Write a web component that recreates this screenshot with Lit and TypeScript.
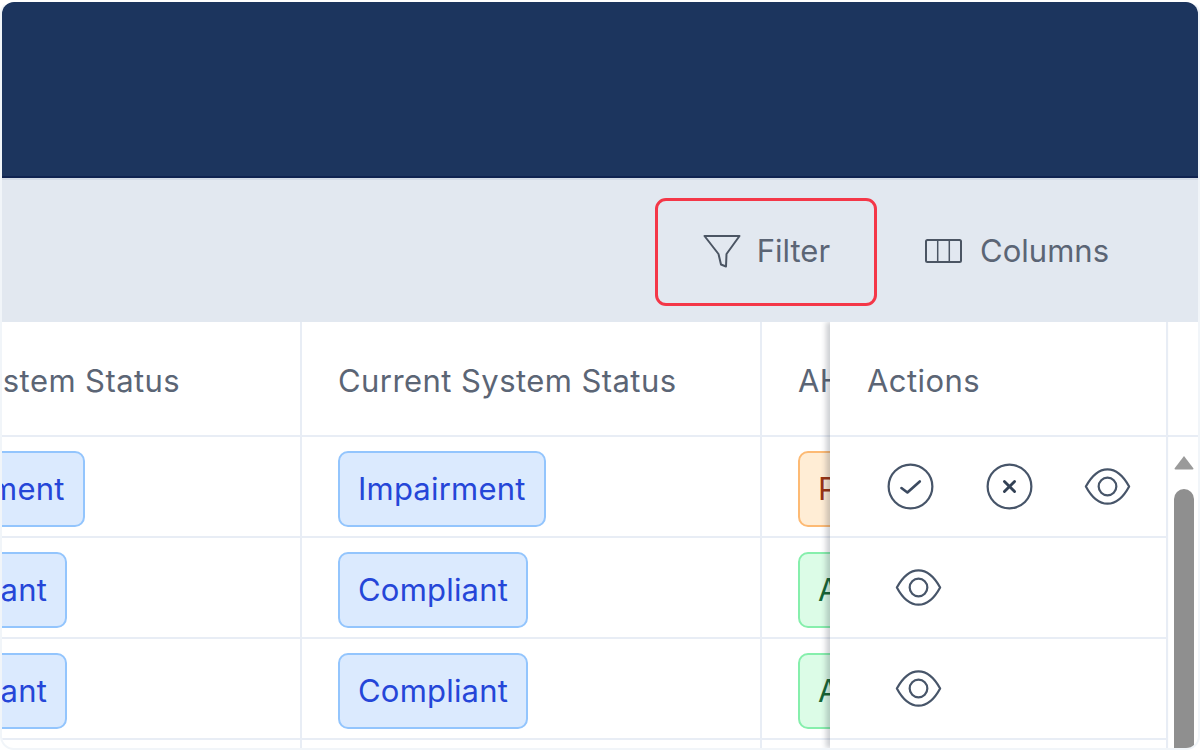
import { LitElement, html, css, svg } from "lit";
import { customElement } from "lit/decorators.js";

const checkIcon = svg`<circle cx="12" cy="12" r="9.9"/><path class="mid" d="M7.900 12.700l2.700 2 5.600-5"/>`;
const xIcon = svg`<circle cx="12" cy="12" r="9.9"/><path class="heavy" d="M9.700 9.700l4.600 4.600M14.300 9.700l-4.600 4.600"/>`;
const eyeIcon = svg`<path d="M2.200 12C4.900 7 8.200 4.200 12 4.200S19.100 7 21.800 12c-2.700 5-6 7.800-9.800 7.800S4.900 17 2.200 12Z"/><circle cx="12" cy="12" r="4"/>`;

const rows = [
  { prev: "Impairment", cur: "Impairment", ahj: "Pending", tone: "orange", actions: [checkIcon, xIcon, eyeIcon] },
  { prev: "Compliant", cur: "Compliant", ahj: "Approved", tone: "green", actions: [eyeIcon] },
  { prev: "Compliant", cur: "Compliant", ahj: "Approved", tone: "green", actions: [eyeIcon] },
  { prev: "Compliant", cur: "Compliant", ahj: "Approved", tone: "green", actions: [eyeIcon] },
];

@customElement("app-root")
export class AppRoot extends LitElement {
  static styles = css`
    :host {
      display: block;
      width: 1200px;
      height: 750px;
      background: #fff;
      font-family: Inter, "Liberation Sans", sans-serif;
      overflow: hidden;
    }
    .card {
      box-sizing: border-box;
      height: 750px;
      border: 2px solid #f1f5f9;
      border-top-color: #fff;
      border-radius: 14px;
      overflow: hidden;
      display: flex;
      flex-direction: column;
      background: #fff;
    }
    .banner {
      flex: 0 0 176px;
      box-sizing: border-box;
      background: #1c355e;
      border-bottom: 2px solid #0f2350;
    }
    .toolbar {
      flex: 0 0 144px;
      box-sizing: border-box;
      background: #e2e8f0;
      border-top: 2px solid #d3dbe6;
      display: flex;
      justify-content: flex-end;
      align-items: center;
      padding: 2px 42px 0 0;
    }
    .tool {
      box-sizing: border-box;
      height: 108px;
      display: flex;
      align-items: center;
      gap: 18px;
      padding: 0 44px 3px 45px;
      border: 3px solid transparent;
      border-radius: 11px;
      font-size: 31px;
      color: #5b6575;
    }
    .tool.active {
      border-color: #f43748;
      gap: 16px;
    }
    .tool svg {
      display: block;
      fill: none;
      stroke: #4b5563;
      stroke-width: 2;
      stroke-linejoin: round;
    }
    .table {
      flex: 1;
      min-height: 0;
      display: flex;
      overflow: hidden;
    }
    .scroll {
      flex: 0 0 828px;
      min-width: 0;
      overflow: hidden;
    }
    .grid {
      display: grid;
      grid-template-columns: 461px 460px 400px;
      margin-left: -161px;
      width: 1321px;
    }
    .cell,
    .head {
      box-sizing: border-box;
      display: flex;
      align-items: center;
      padding: 4px 0 0 36px;
      border-right: 2px solid #e8edf5;
      border-bottom: 2px solid #e8edf5;
      white-space: nowrap;
      height: 101px;
    }
    .head {
      height: 115px;
      font-size: 31px;
      letter-spacing: 0.43px;
      color: #5b6575;
      font-weight: 400;
    }
    .badge {
      box-sizing: border-box;
      height: 76px;
      display: flex;
      align-items: center;
      padding: 0 18px;
      border: 2px solid;
      border-radius: 10px;
      font-size: 31px;
      letter-spacing: 0.2px;
    }
    .blue {
      background: #dbeafe;
      border-color: #93c5fd;
      color: #2546d8;
    }
    .orange {
      background: #ffedd5;
      border-color: #fdba74;
      color: #9a3412;
    }
    .green {
      background: #dcfce7;
      border-color: #86efac;
      color: #166534;
    }
    .actions {
      flex: 0 0 338px;
      box-sizing: border-box;
      background: #fff;
      box-shadow: -4px 0 5px rgba(30, 41, 59, 0.22);
      position: relative;
    }
    .actions .head {
      padding-left: 37px;
    }
    .action-cell {
      box-sizing: border-box;
      height: 101px;
      display: flex;
      align-items: center;
      gap: 45.5px;
      padding-left: 62px;
      border-right: 2px solid #e8edf5;
      border-bottom: 2px solid #e8edf5;
    }
    .action-cell.many {
      padding-left: 54px;
    }
    .action-cell svg {
      display: block;
      flex: none;
      fill: none;
      stroke: #475569;
      stroke-width: 1;
      stroke-linecap: round;
      stroke-linejoin: round;
    }
    .mid {
      stroke-width: 1.200;
      stroke: #3b4a60;
    }
    .heavy {
      stroke-width: 1.300;
      stroke: #334155;
    }
    .bar {
      flex: 1;
      display: flex;
      flex-direction: column;
      align-items: center;
      min-width: 0;
    }
    .bar-head {
      box-sizing: border-box;
      width: 100%;
      height: 115px;
      flex: none;
      border-bottom: 2px solid #e8edf5;
    }
    .bar svg {
      display: block;
      margin: 18px 0 0 2px;
      flex: none;
      fill: #9a9a9a;
    }
    .thumb {
      flex: 1;
      width: 20px;
      margin: 19px 0 0 2px;
      background: #8f8f8f;
      border-radius: 10px 10px 0 0;
    }
  `;

  render() {
    return html`<div class="card">
      <div class="banner"></div>
      <div class="toolbar">
        <div class="tool active">
          <svg width="38" height="34" viewBox="0 0 38 34"><path d="M1.500 2H36.500L23.500 20L23 32.500L18 30.500L15.500 20Z"/></svg>
          <span>Filter</span>
        </div>
        <div class="tool">
          <svg width="37" height="26" viewBox="0 0 37 26"><rect x="1" y="2" width="35" height="22" rx="1.500"/><path d="M12.700 2V24M24.300 2V24" stroke-width="1.500"/></svg>
          <span>Columns</span>
        </div>
      </div>
      <div class="table">
        <div class="scroll">
          <div class="grid">
            <div class="head">Audit System Status</div>
            <div class="head">Current System Status</div>
            <div class="head">AHJ Status</div>
            ${rows.map(
              (r) => html`
                <div class="cell"><div class="badge blue">${r.prev}</div></div>
                <div class="cell"><div class="badge blue">${r.cur}</div></div>
                <div class="cell"><div class="badge ${r.tone}">${r.ahj}</div></div>
              `
            )}
          </div>
        </div>
        <div class="actions">
          <div class="head">Actions</div>
          ${rows.map(
            (r) => html`<div class="action-cell ${r.actions.length > 1 ? "many" : ""}">
              ${r.actions.map((a) => html`<svg width="53" height="53" viewBox="0 0 24 24">${a}</svg>`)}
            </div>`
          )}
        </div>
        <div class="bar">
          <div class="bar-head"></div>
          <svg width="20" height="15" viewBox="0 0 20 15"><path d="M10 1L19.500 13.500Q19.500 14.500 18.500 14.500H1.500Q.5 14.500 .5 13.500Z"/></svg>
          <div class="thumb"></div>
        </div>
      </div>
    </div>`;
  }
}
